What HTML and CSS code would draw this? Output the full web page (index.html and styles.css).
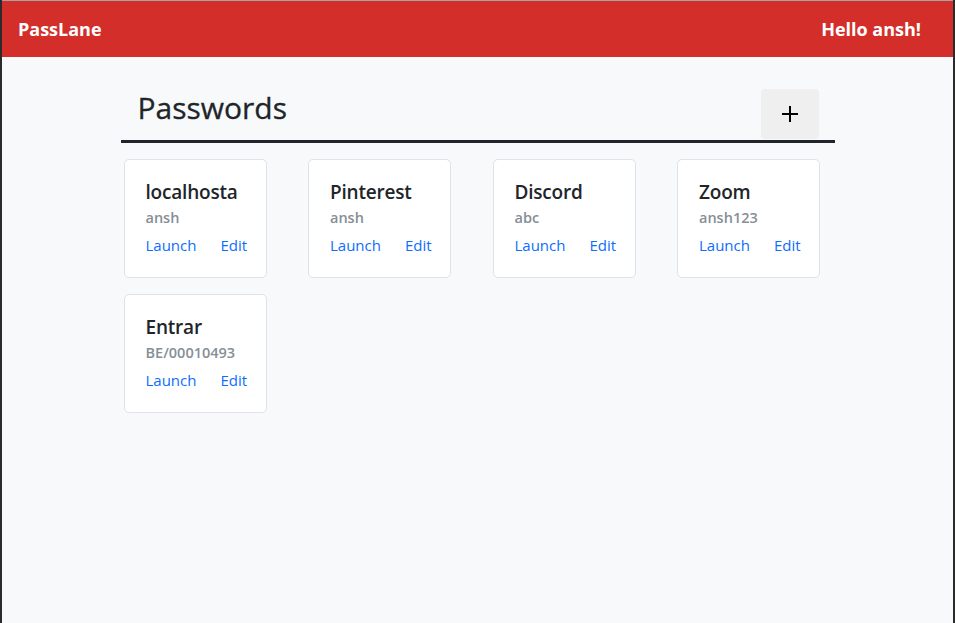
FILE: index.html
```html
<!DOCTYPE html>
<html lang="en">
<head>
<meta charset="utf-8">
<title>PassLane</title>
<link rel="stylesheet" href="styles.css">
</head>
<body>
<div class="frame">
  <nav class="navbar">
    <span class="brand">PassLane</span>
    <span class="greeting">Hello ansh!</span>
  </nav>
  <main class="container">
    <div class="page-head">
      <h2 class="page-title">Passwords</h2>
      <button class="add-btn" aria-label="Add">
        <svg width="16" height="16" viewBox="0 0 16 16"><path d="M8 0V16M0 8H16" stroke="#000" stroke-width="2" fill="none"/></svg>
      </button>
    </div>
    <div class="cards">
      <div class="card"><div class="card-title">localhosta</div><div class="card-subtitle">ansh</div><div class="card-links"><a class="card-link">Launch</a><a class="card-link">Edit</a></div></div>
      <div class="card"><div class="card-title">Pinterest</div><div class="card-subtitle">ansh</div><div class="card-links"><a class="card-link">Launch</a><a class="card-link">Edit</a></div></div>
      <div class="card"><div class="card-title">Discord</div><div class="card-subtitle">abc</div><div class="card-links"><a class="card-link">Launch</a><a class="card-link">Edit</a></div></div>
      <div class="card"><div class="card-title">Zoom</div><div class="card-subtitle">ansh123</div><div class="card-links"><a class="card-link">Launch</a><a class="card-link">Edit</a></div></div>
      <div class="card"><div class="card-title">Entrar</div><div class="card-subtitle">BE/00010493</div><div class="card-links"><a class="card-link">Launch</a><a class="card-link">Edit</a></div></div>
    </div>
  </main>
</div>
</body>
</html>
```
FILE: styles.css
```css
* { box-sizing: border-box; }
html, body { margin: 0; height: 100%; }
body {
  font-family: "Open Sans", "Noto Sans", sans-serif;
  color: #212529;
  background: #2b2b2b;
}
.frame {
  height: 100%;
  margin: 0 2px 0 2px;
  border-top: 1px solid #a3a3a3;
  background: #f8f9fa;
}
.navbar {
  height: 56px;
  background: #d32e29;
  color: #fff;
  display: flex;
  justify-content: space-between;
  align-items: center;
  padding: 0 32px 0 16px;
  font-weight: 700;
  font-size: 18px;
}
.brand, .greeting { line-height: 24px; }
.container {
  width: 714px;
  margin: 0 auto;
  padding-top: 32px;
}
.page-head {
  display: flex;
  justify-content: space-between;
  align-items: flex-end;
  border-bottom: 3px solid #212529;
  padding: 0 16px 1px 17px;
}
.page-title {
  margin: 0 0 13px;
  font-size: 30px;
  font-weight: 500;
  line-height: 36px;
  -webkit-text-stroke: 0.3px #212529;
}
.add-btn {
  width: 58px;
  height: 50px;
  border: none;
  border-radius: 4px;
  background: #efefef;
  display: flex;
  align-items: center;
  justify-content: center;
  padding: 0;
}
.add-btn svg { display: block; }
.cards {
  display: grid;
  grid-template-columns: repeat(4, 143px);
  column-gap: 41.5px;
  row-gap: 16px;
  margin-top: 16px;
  padding-left: 3px;
}
.card {
  height: 119px;
  background: #fff;
  border: 1px solid #dfe2e6;
  border-radius: 5px;
  padding: 20px 10px 0 21px;
}
.card-title {
  font-size: 19px;
  font-weight: 600;
  line-height: 24px;
  white-space: nowrap;
  letter-spacing: -0.2px;
}
.card-subtitle {
  margin-top: 4px;
  font-size: 14.5px;
  font-weight: 600;
  line-height: 20px;
  color: #868e96;
}
.card-links {
  margin-top: 7px;
  display: flex;
  gap: 24px;
  font-size: 15px;
  line-height: 20px;
}
.card-link { color: #0d6efd; text-decoration: none; }
```
